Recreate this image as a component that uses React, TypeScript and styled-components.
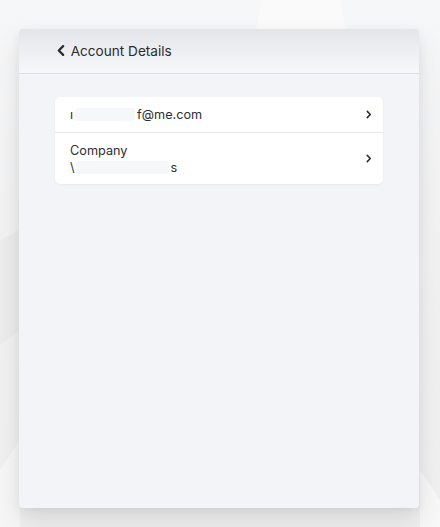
import React from "react";
import styled, { createGlobalStyle } from "styled-components";

const Global = createGlobalStyle`
  html, body { margin: 0; padding: 0; }
  body {
    background: #f2f2f3;
    font-family: Inter, "Noto Sans", "Liberation Sans", sans-serif;
    -webkit-font-smoothing: antialiased;
  }
`;

const Page = styled.div`
  position: relative;
  width: 440px;
  height: 527px;
  overflow: hidden;
  box-sizing: border-box;
  padding: 29px 21px 19px 19px;
  background: linear-gradient(180deg, #f6f7f8 0%, #f2f2f3 40%, #efeff0 100%);
`;

const Backdrop = styled.svg`
  position: absolute;
  inset: 0;
  z-index: 0;
`;

const Window = styled.div`
  position: relative;
  z-index: 1;
  width: 400px;
  height: 479px;
  display: flex;
  flex-direction: column;
  background: #f3f4f8;
  border-radius: 4px;
  overflow: hidden;
  box-shadow: 0 12px 24px rgba(0, 0, 0, 0.1), 0 2px 8px rgba(0, 0, 0, 0.05);
`;

const Header = styled.div`
  height: 43px;
  display: flex;
  align-items: center;
  gap: 6px;
  padding: 0 0 1px 38px;
  background: linear-gradient(180deg, #e4e5e9 0%, #eeeff2 55%, #f8f8fa 100%);
  border-bottom: 1px solid #dcdde1;
`;

const Title = styled.span`
  font-size: 13.6px;
  color: #2b2b2e;
`;

const Body = styled.div`
  flex: 1;
  padding: 23px 36px 0 36px;
`;

const List = styled.div`
  background: #ffffff;
  border-radius: 5px;
  box-shadow: 0 1px 3px rgba(0, 0, 0, 0.05);
  overflow: hidden;
`;

const Row = styled.div<{ $h: number }>`
  height: ${(p) => p.$h}px;
  display: flex;
  align-items: center;
  justify-content: space-between;
  padding: 0 11px 0 15px;
  box-sizing: border-box;
  & + & {
    border-top: 1px solid #e8e8eb;
  }
`;

const Lines = styled.div`
  display: flex;
  flex-direction: column;
  font-size: 12.7px;
  line-height: 17px;
  color: #2e2e30;
`;

const Line = styled.div`
  display: flex;
  align-items: center;
  white-space: nowrap;
`;

const Redact = styled.span<{ $w: number }>`
  display: inline-block;
  width: ${(p) => p.$w}px;
  height: 13px;
  background: #f6f7f8;
  border-radius: 3px;
  filter: blur(0.6px);
`;

const Chevron = ({ dir, size }: { dir: "left" | "right"; size: number }) => (
  <svg width={size * 0.7} height={size} viewBox="0 0 7 10" fill="none">
    <path
      d={dir === "left" ? "M5.6 1 L1.6 5 L5.6 9" : "M1.4 1.5 L4.8 5 L1.4 8.5"}
      stroke="#2a2a2c"
      strokeWidth={dir === "left" ? 2 : 1.7}
      strokeLinecap="round"
      strokeLinejoin="round"
    />
  </svg>
);

export default function App() {
  return (
    <>
      <Global />
      <Page>
        <Backdrop width="440" height="527" viewBox="0 0 440 527">
          <polygon points="262,0 340,0 346,29 256,29" fill="#fafafa" />
          <polygon points="0,240 20,230 20,330 0,345" fill="#ececed" />
          <polygon points="0,470 20,440 20,527 0,527" fill="#f6f6f7" />
          <polygon points="420,470 440,500 440,527 420,527" fill="#f7f7f8" />
        </Backdrop>
        <Window>
          <Header>
            <Chevron dir="left" size={11} />
            <Title>Account Details</Title>
          </Header>
          <Body>
            <List>
              <Row $h={35}>
                <Lines>
                  <Line>
                    ı<Redact $w={60} style={{ marginLeft: 2, marginRight: 2 }} />
                    f@me.com
                  </Line>
                </Lines>
                <Chevron dir="right" size={9} />
              </Row>
              <Row $h={52}>
                <Lines>
                  <Line>Company</Line>
                  <Line>
                    \<Redact $w={93} style={{ marginLeft: 1, marginRight: 2 }} />s
                  </Line>
                </Lines>
                <Chevron dir="right" size={9} />
              </Row>
            </List>
          </Body>
        </Window>
      </Page>
    </>
  );
}
